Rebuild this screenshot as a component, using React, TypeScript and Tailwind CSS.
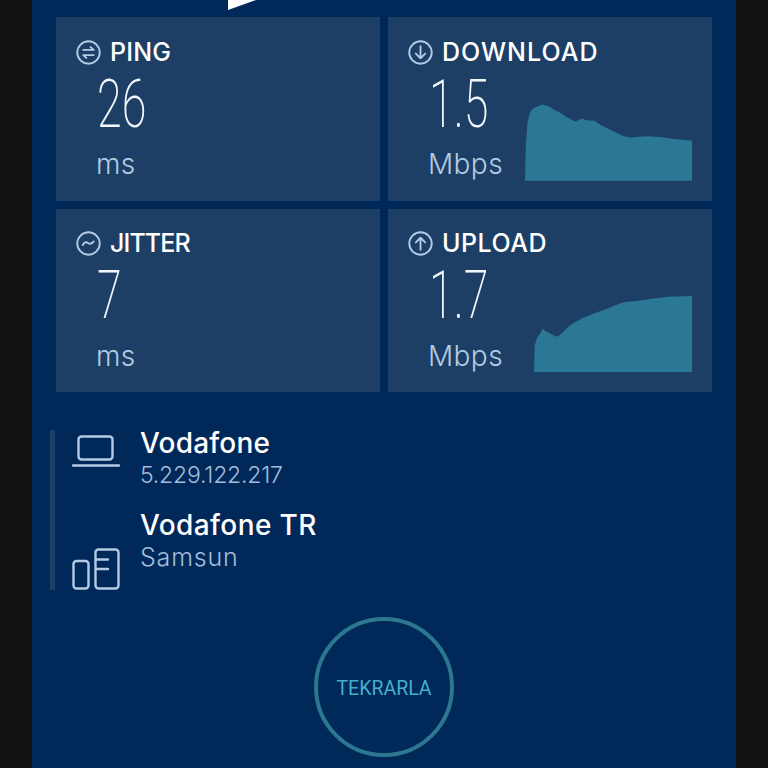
import React from "react";

const DOWNLOAD_POINTS =
  "418,513 420,420 425,340 430,318 435,305 442,296 450,292 460,288 470,284 480,287 490,290 500,296 510,302 520,306 530,312 540,320 550,325 560,331 570,335 580,330 590,326 600,330 610,332 625,332 637,340 650,348 665,355 680,362 695,370 710,377 722,381 735,383 760,381 790,379 830,382 870,388 920,392 920,513";
const UPLOAD_POINTS =
  "447,500 449,420 454,405 458,395 465,385 473,370 482,378 490,382 505,390 517,395 526,388 535,380 550,365 562,356 575,348 592,339 610,332 630,324 650,317 665,311 680,305 700,297 720,291 760,287 800,281 850,275 920,273 920,500";

const CircleIcon = ({ children }: { children: React.ReactNode }) => (
  <svg viewBox="0 0 24 24" className="w-[25px] h-[25px] shrink-0" fill="none" stroke="#b4cbe4" strokeWidth="1.8" strokeLinecap="round" strokeLinejoin="round">
    <circle cx="12" cy="12" r="10.8" />
    {children}
  </svg>
);

interface MetricCardProps {
  icon: React.ReactNode;
  label: string;
  labelClass: string;
  value: string;
  unit: string;
  chart?: React.ReactNode;
}

const MetricCard: React.FC<MetricCardProps> = ({ icon, label, labelClass, value, unit, chart }) => {
  return (
    <div className="h-[183.5px] bg-[#1e3f65] pl-5 pr-5 pb-5 flex justify-between items-end">
      <div className="w-[117px] shrink-0 self-stretch flex flex-col pt-[21px]">
        <div className="flex items-center gap-[9px] h-[28px] whitespace-nowrap">
          {icon}
          <span className={`text-[25px] leading-none font-medium text-white ${labelClass}`}>{label}</span>
        </div>
        <div className="pl-[21px] mt-[5px]">
          <div className="h-[66px] flex items-center text-[#f2f7fc] font-['Roboto',sans-serif] font-extralight text-[67px] leading-none origin-left scale-x-[0.67] whitespace-nowrap">
            {value}
          </div>
        </div>
        <div className="pl-5 mt-[11px] text-[28px] leading-[32px] tracking-[0.4px] font-light text-[#b4cbe4]">{unit}</div>
      </div>
      {chart && <div className="shrink-0">{chart}</div>}
    </div>
  );
};

export default function App() {
  return (
    <div className="w-[768px] h-[768px] overflow-hidden bg-[#111111] flex justify-center font-['Inter',sans-serif]">
      <div className="w-[704px] h-full bg-[#00295a] px-6 flex flex-col">
        <div className="h-[17px] pl-[172px]">
          <svg viewBox="0 0 28 10" className="w-7 h-[10px]">
            <polygon points="0,0 28,0 0,10" fill="#ffffff" />
          </svg>
        </div>

        <div className="grid grid-cols-2 gap-2">
          <MetricCard
            label="PING"
            labelClass="tracking-[0.2px]"
            value="26"
            unit="ms"
            icon={
              <CircleIcon>
                <path d="M7 9.5h10L14 6.8M17 14.5H7l3 2.7" />
              </CircleIcon>
            }
          />
          <MetricCard
            label="DOWNLOAD"
            labelClass="tracking-[1px]"
            value="1.5"
            unit="Mbps"
            icon={
              <CircleIcon>
                <path d="M12 6v11.5M7.5 13l4.5 4.5 4.5-4.5" />
              </CircleIcon>
            }
            chart={
              <svg viewBox="418 280 502 233" className="block w-[167px] h-[78px]">
                <polygon points={DOWNLOAD_POINTS} fill="#2b7796" />
              </svg>
            }
          />
          <MetricCard
            label="JITTER"
            labelClass="tracking-[-0.9px]"
            value="7"
            unit="ms"
            icon={
              <CircleIcon>
                <path d="M6.5 13.5c1.3-2.6 3-3.4 5-2s3.8.8 5.5-1.5" />
              </CircleIcon>
            }
          />
          <MetricCard
            label="UPLOAD"
            labelClass="tracking-[0.5px]"
            value="1.7"
            unit="Mbps"
            icon={
              <CircleIcon>
                <path d="M12 18V6.5M7.5 11L12 6.5l4.5 4.5" />
              </CircleIcon>
            }
            chart={
              <svg viewBox="447 270 473 230" className="block w-[158px] h-[77px]">
                <polygon points={UPLOAD_POINTS} fill="#2b7796" />
              </svg>
            }
          />
        </div>

        <div className="mt-[38px] ml-[-6px] h-[160px] flex">
          <div className="w-[5px] bg-[#1e3f65]" />
          <div className="ml-[17px] w-12 flex flex-col justify-between pt-[5px]">
            <svg viewBox="0 0 48 33" className="w-12 h-[33px]" fill="none" stroke="#b4cbe4" strokeWidth="2.4" strokeLinecap="round" strokeLinejoin="round">
              <rect x="6.5" y="1.5" width="34" height="23" rx="3" />
              <path d="M1 30.5h46" />
            </svg>
            <svg viewBox="0 0 48 42" className="w-12 h-[42px]" fill="none" stroke="#b4cbe4" strokeWidth="2.4" strokeLinecap="round" strokeLinejoin="round">
              <rect x="1.5" y="13" width="15" height="27.5" rx="3" />
              <rect x="23.5" y="1.5" width="23" height="39" rx="3" />
              <path d="M24 11.5h12M24 21h12" />
            </svg>
          </div>
          <div className="ml-5 flex flex-col -mt-[1px]">
            <div className="text-[28px] leading-[28px] tracking-[0.2px] text-white font-medium">Vodafone</div>
            <div className="mt-[4px] text-[23px] leading-[28px] tracking-[-0.2px] font-light text-[#a3bcdb]">5.229.122.217</div>
            <div className="mt-[22px] text-[28px] leading-[28px] tracking-[0.4px] text-white font-medium">Vodafone TR</div>
            <div className="mt-[4px] text-[25px] leading-[28px] tracking-[0.8px] font-light text-[#a3bcdb]">Samsun</div>
          </div>
        </div>

        <div className="mt-[27px] flex justify-center">
          <button className="w-[140px] h-[140px] rounded-full border-4 border-[#2b7890] pt-[3px] flex items-center justify-center text-[19.5px] text-[#45aecb] font-['Roboto',sans-serif]">
            TEKRARLA
          </button>
        </div>
      </div>
    </div>
  );
}
